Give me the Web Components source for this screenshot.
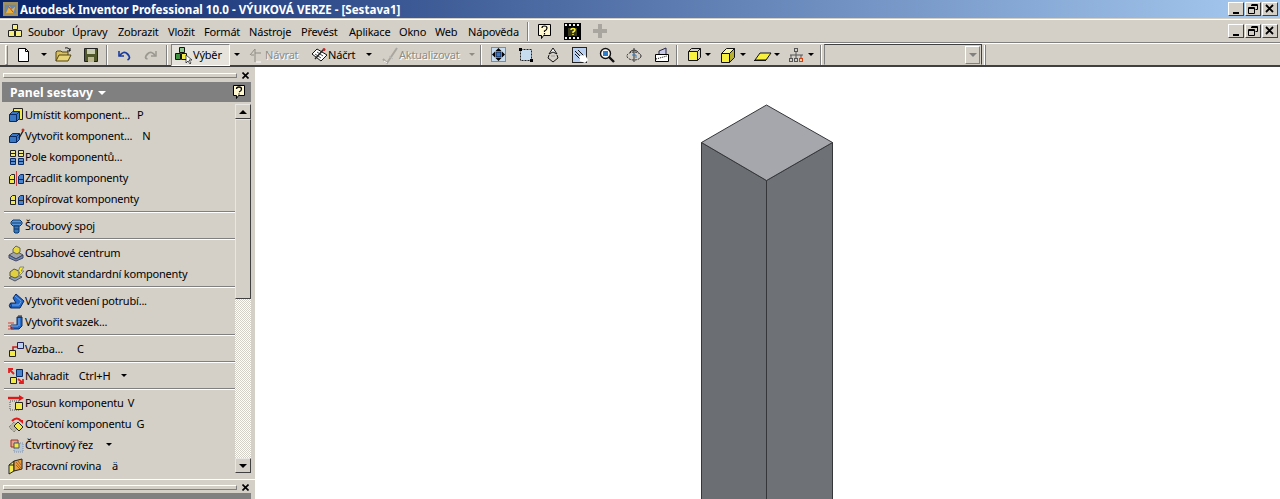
<!DOCTYPE html>
<html>
<head>
<meta charset="utf-8">
<style>
  html, body { margin: 0; padding: 0; height: 100%; overflow: hidden; background: #d4d0c8; }
  body { font: 11px "Noto Sans", sans-serif; color: #000; }
  inv-app { height: 499px; }
</style>
</head>
<body>
<inv-app>
  <inv-titlebar>Autodesk Inventor Professional 10.0 - VÝUKOVÁ VERZE - [Sestava1]</inv-titlebar>
  <inv-menubar></inv-menubar>
  <inv-toolbar></inv-toolbar>
  <inv-workspace>
    <inv-panel>
      <inv-panel-item icon="place" key="P" style="--key:7px">Umístit komponent...</inv-panel-item>
      <inv-panel-item icon="create" key="N" style="--key:10px">Vytvořit komponent...</inv-panel-item>
      <inv-panel-item icon="pattern">Pole komponentů...</inv-panel-item>
      <inv-panel-item icon="mirror">Zrcadlit komponenty</inv-panel-item>
      <inv-panel-item icon="copy">Kopírovat komponenty</inv-panel-item>
      <inv-panel-sep></inv-panel-sep>
      <inv-panel-item icon="bolt">Šroubový spoj</inv-panel-item>
      <inv-panel-sep></inv-panel-sep>
      <inv-panel-item icon="content">Obsahové centrum</inv-panel-item>
      <inv-panel-item icon="refresh">Obnovit standardní komponenty</inv-panel-item>
      <inv-panel-sep></inv-panel-sep>
      <inv-panel-item icon="pipe">Vytvořit vedení potrubí...</inv-panel-item>
      <inv-panel-item icon="harness">Vytvořit svazek...</inv-panel-item>
      <inv-panel-sep></inv-panel-sep>
      <inv-panel-item icon="constraint" key="C" style="--key:14px">Vazba...</inv-panel-item>
      <inv-panel-sep></inv-panel-sep>
      <inv-panel-item icon="replace" key="Ctrl+H" arrow style="--key:10px;--am:11px">Nahradit</inv-panel-item>
      <inv-panel-sep></inv-panel-sep>
      <inv-panel-item icon="move" key="V" style="--key:4px">Posun komponentu</inv-panel-item>
      <inv-panel-item icon="rotate" key="G" style="--key:5px">Otočení komponentu</inv-panel-item>
      <inv-panel-item icon="section" arrow style="--am:13px">Čtvrtinový řez</inv-panel-item>
      <inv-panel-item icon="plane" key="ä" style="--key:11px">Pracovní rovina</inv-panel-item>
    </inv-panel>
    <inv-viewport></inv-viewport>
  </inv-workspace>
</inv-app>

<script>
const ICONS = {
  place: '<path d="M5.500 1.500h9v11h-3v-8h-6z" fill="#f4e94a" stroke="#222"/><path d="M1.500 7.500l3-3h7v7l-3 3h-7z" fill="#3b78c4" stroke="#0a2a66"/><path d="M1.500 7.500h7v7M8.500 7.500l3-3" fill="none" stroke="#0a2a66"/>',
  create: '<path d="M1.500 8.500l3-3h7v6l-3 3h-7z" fill="#3b78c4" stroke="#0a2a66"/><path d="M1.500 8.500h7v6M8.500 8.500l3-3" fill="none" stroke="#0a2a66"/><path d="M11 10l4-7" stroke="#222" stroke-width="1.500"/><circle cx="15" cy="2" r="1.500" fill="#c03020"/>',
  pattern: '<path d="M2.500 1.500h5v6h-5zM10.500 1.500h5v6h-5z" fill="#f2ea7a" stroke="#222"/><path d="M2.500 9.500h5v6h-5zM10.500 9.500h5v6h-5z" fill="#5a90d0" stroke="#0a2a66"/><path d="M2.500 4.500h5M10.500 4.500h5M2.500 12.500h5M10.500 12.500h5" stroke="#222"/>',
  mirror: '<path d="M1.500 6.500l2-2h3v9h-5z" fill="#f0e850" stroke="#222"/><path d="M10.500 6.500l2-2h3v9h-5z" fill="#4a84cc" stroke="#0a2a66"/><path d="M8.500 1v15" stroke="#d04040"/><path d="M2 9.500h4M11 9.500h4" stroke="#222"/>',
  copy: '<path d="M2.500 6.500l2-2h3v9h-5z" fill="#f0e850" stroke="#222"/><path d="M10.500 6.500l2-2h3v9h-5z" fill="#4a84cc" stroke="#0a2a66"/><path d="M3 9.500h4M11 9.500h4" stroke="#222"/>',
  bolt: '<path d="M5 2h7l2 2v2l-2 2H5L3 6V4z" fill="#5a96d8" stroke="#0a3a70"/><path d="M6 8h5v6l-1 1H7l-1-1z" fill="#3a78b8" stroke="#0a3a70"/><path d="M6 11h5M4 5h9" stroke="#0a3a70"/>',
  content: '<path d="M1 10l7-4 7 4-7 4z" fill="#a0a4a8" stroke="#555"/><path d="M1 10v3l7 3 7-3v-3l-7 4z" fill="#6a8fb5" stroke="#446"/><path d="M5 4l3-3 4 2v4l-3 2-4-2z" fill="#e8d840" stroke="#665"/>',
  refresh: '<path d="M1 12l7-4 6 3-7 4z" fill="#8fa4c0" stroke="#555"/><path d="M2 6l4-3 5 2v5l-4 2-5-2z" fill="#e0d040" stroke="#554"/><path d="M12 1l4 0-3 4h3l-6 6 2-5H10z" fill="#ffee20" stroke="#887"/>',
  pipe: '<path d="M8 1l8 7-4 7H2.500Q0 13 2.500 10H8L5 5z" fill="#2468c8" stroke="#0a2a66"/><path d="M3 12h8l2-3.500M7 3l6 5" fill="none" stroke="#6aa4ec"/><path d="M2.500 10q2 2.500 0 5" fill="none" stroke="#0a2a66"/>',
  harness: '<path d="M9 3h5v9l-3 3H3v-4h6z" fill="#2468c8" stroke="#0a2a66"/><path d="M11 1v3M13 1v3" stroke="#222"/><path d="M0 9h6M0 12h5M0 15h6" stroke="#d04030"/><path d="M3 12h7M11 4v8" stroke="#7ab0f0"/>',
  constraint: '<path d="M9.500 1.500h6v6h-6z" fill="#b9d0f0" stroke="#225"/><path d="M1.500 9.500h6v6h-6z" fill="#f2e94a" stroke="#222"/><path d="M5 9V6h4" fill="none" stroke="#c02020" stroke-width="1.600"/>',
  replace: '<path d="M8.500 1.500h6v7h-6z" fill="#4a84cc" stroke="#0a2a66"/><path d="M2.500 9.500h6v6h-6z" fill="#f2e94a" stroke="#222"/><path d="M1 1l5 5M1 5V1h4" fill="none" stroke="#e02020" stroke-width="1.800"/><path d="M15 15l-5-4M15 11v4h-4" fill="none" stroke="#e02020" stroke-width="1.800"/>',
  move: '<path d="M2 6h9v9H2z" fill="#d8d4c8" stroke="#555" stroke-dasharray="1 1"/><path d="M7.500 7.500h7v7h-7z" fill="#f2e94a" stroke="#222"/><path d="M0 3h12" stroke="#e01818" stroke-width="2.400"/><path d="M11 0l5 3-5 3z" fill="#e01818"/>',
  rotate: '<path d="M1 11l5-5 5 5-5 5z" fill="#bcb8a8" stroke="#666" stroke-dasharray="1 1"/><path d="M6 10l4-4 5 5-4 4z" fill="#f2e94a" stroke="#222"/><path d="M4 5q5-5 9 0" fill="none" stroke="#e01818" stroke-width="2.200"/><path d="M11 4h4v4z" fill="#e01818"/>',
  section: '<path d="M3 3h7v7H3z" fill="#e8a090" stroke="#a03020"/><path d="M6 6h9v9H6z" fill="#b8c8dc" stroke="#8090a8" stroke-dasharray="1 1"/><path d="M6 6h5v5H6z" fill="#f2e94a" stroke="#555"/>',
  plane: '<path d="M1 7l5-4v10l-5 3z" fill="#f2e94a" stroke="#222"/><path d="M6 3l8-2v10l-8 2z" fill="#e8a040" stroke="#222"/><path d="M8 4l5 6M8 7l4 4M10 3l3 4" stroke="#b06020"/><path d="M1 7h5" stroke="#222"/>',
  assembly: '<path d="M5.500 1.500h5v5h-5z" fill="#f8f080" stroke="#222"/><path d="M1.500 7.500h6v6h-6zM8.500 7.500h6v6h-6z" fill="#f8f080" stroke="#222"/>',
  selectA: '<path d="M4.500 .5h5v5h-5z" fill="#8fc88f" stroke="#111"/><path d="M.5 6.500h5v6h-5z" fill="#3f903f" stroke="#111"/><path d="M6.500 6.500h5v6h-5z" fill="#f2e94a" stroke="#111"/><path d="M11 8l0 8 2-2 2 3 1-1-2-3h3z" fill="#fff" stroke="#111" stroke-width=".7"/>',
  doc: '<path d="M2.500 1.500h7l3 3v10h-10z" fill="#fff" stroke="#000"/><path d="M9.500 1.500v3h3" fill="none" stroke="#000"/>',
  open: '<path d="M1 14V5l1-1h4l1 1h6v3" fill="#d8c060" stroke="#554410"/><path d="M1 14l3-6h12l-3 6z" fill="#e8d478" stroke="#554410"/><path d="M10 1q4-1 5 3M15 1v3h-3" fill="none" stroke="#111"/>',
  save: '<path d="M1.500 1.500h13v13h-13z" fill="#50582c" stroke="#222"/><path d="M4 2h8v5H4z" fill="#c8ccb0"/><path d="M5 10h6v5H5z" fill="#bcb890"/>',
  undo: '<path d="M3 4v5h5" fill="none" stroke="#1c3c9c" stroke-width="1.600"/><path d="M3.500 9q4-6 8-2t0 6" fill="none" stroke="#1c3c9c" stroke-width="1.800"/>',
  redo: '<path d="M13 4v5H8" fill="none" stroke="#9a9890" stroke-width="1.500"/><path d="M12.500 9q-4-6-8-2t0 5" fill="none" stroke="#9a9890" stroke-width="1.800"/>',
  back: '<path d="M2 8l5-6 0 4h6M7 6v9M3 8h3" fill="none" stroke="#8e8c84"/><path d="M8 15h5" stroke="#fff"/>',
  sketch: '<path d="M2 7l5-5 10 6-6 6z" fill="#fff" stroke="#111"/><path d="M5 7l6 4M7 5l6 4" stroke="#444"/><path d="M13 3l-8 9" stroke="#222" stroke-width="1.400"/><circle cx="14" cy="2.500" r="1.500" fill="#c02020"/>',
  update: '<path d="M2 12l4 4 10-15" fill="none" stroke="#a8a69e" stroke-width="2"/><path d="M3 14l3 2" stroke="#fff"/><path d="M8 9l4 3" stroke="#bbb"/>',
  fit: '<rect x=".5" y=".5" width="14" height="14" fill="#c8dcf0" stroke="#888"/><path d="M7.500 1l3 3h-6zM7.500 14l3-3h-6zM1 7.500l3-3v6zM14 7.500l-3-3v6z" fill="#000"/><rect x="5" y="5" width="5" height="5" fill="#3a78c4" stroke="#124"/>',
  zoomwin: '<rect x="2.500" y="2.500" width="11" height="11" fill="#c8dcf0" stroke="#222" stroke-dasharray="2 1"/><rect x="1" y="1" width="3" height="3"/><rect x="12" y="12" width="3" height="3"/>',
  rotview: '<path d="M8 1l4 6-4-2-4 2z" fill="#fff" stroke="#111"/><path d="M8 15l5-4-1-3M8 15l-5-4 1-3" fill="none" stroke="#111"/><path d="M6 9h4" stroke="#999"/>',
  pan: '<rect x=".5" y=".5" width="14" height="15" fill="#b9d0f0" stroke="#222"/><path d="M3 4l9 9M6 3l8 8M3 7l7 7" stroke="#111"/><path d="M7 9l6-1 3 5-3 3-5-2z" fill="#fff"/>',
  mag: '<circle cx="6.500" cy="6.500" r="5" fill="#fff" stroke="#111" stroke-width="1.400"/><rect x="4" y="4" width="5" height="5" fill="#2c7cc8"/><path d="M10 10l5 5" stroke="#111" stroke-width="2.400"/>',
  orbit: '<ellipse cx="8" cy="9" rx="7" ry="4" fill="none" stroke="#222" stroke-dasharray="2 1"/><path d="M8 1v14M4 5q4-4 8 0" fill="none" stroke="#333"/><path d="M6 8h4v3" fill="none" stroke="#2c7cc8"/>',
  sectionview: '<path d="M1.500 7.500h13v7h-13z" fill="#fff" stroke="#000"/><path d="M5 7V4l7-3v6" fill="#c8c8e8" stroke="#224"/><path d="M2 12l11-3" stroke="#000" stroke-dasharray="1 1"/>',
  boxa: '<path d="M1.500 4.500h9v9h-9z" fill="#f8f040" stroke="#111"/><path d="M1.500 4.500l3-3h9v9l-3 3M10.500 4.500l3-3" fill="none" stroke="#111"/>',
  boxb: '<path d="M1.500 6.500h8v9h-8z" fill="#f8f040" stroke="#111"/><path d="M1.500 6.500l5-5h8l-5 5z" fill="#f8f8a0" stroke="#111"/><path d="M9.500 6.500l5-5v9l-5 5z" fill="#b8b030" stroke="#111"/>',
  plan: '<path d="M1 13l5-7h11l-5 7z" fill="#f8f040" stroke="#111"/><path d="M0 13.500h12" stroke="#111"/>',
  tree: '<g fill="none" stroke="#555"><rect x="6.500" y="1.500" width="3" height="3"/><path d="M8 5v3M2 8h13M3 8v3M8 8v3M13 8v3"/><rect x="1.500" y="11.500" width="3" height="3"/><rect x="6.500" y="11.500" width="3" height="3"/><rect x="11.500" y="11.500" width="3" height="3" stroke="#d04010" fill="#f8d0b0"/></g>'
};
const svgIcon = (name, s = 16) => `<svg width="${s}" height="${s}" viewBox="0 0 16 16" style="display:block;overflow:visible">${ICONS[name]}</svg>`;

const CAPS = {
  min: '<path d="M3 9h6v2H3z"/>',
  restore: '<path d="M4.500 1.500h6v5h-2M4 2.500h6" fill="none" stroke="#000"/><path d="M1.500 4.500h6v6h-6zM1 5.500h7" fill="none" stroke="#000"/>',
  close: '<path d="M2 2l7 7M9 2l-7 7" stroke="#000" stroke-width="1.800"/>'
};

class InvApp extends HTMLElement {
  constructor() {
    super();
    this.attachShadow({mode: "open"}).innerHTML = `
      <style>:host { display: flex; flex-direction: column; }</style>
      <slot></slot>`;
  }
}

class InvCaption extends HTMLElement {
  constructor() {
    super();
    const kind = this.getAttribute("kind");
    this.attachShadow({mode: "open"}).innerHTML = `
      <style>
        :host { display: block; width: 16px; height: 14px; margin-left: 1px; background: #d4d0c8; box-sizing: border-box;
          border: 1px solid; border-color: #fff #404040 #404040 #fff; }
        svg { display: block; margin: 0 1px; }
      </style>
      <svg width="12" height="12" viewBox="0 0 12 12">${CAPS[kind]}</svg>`;
  }
}

class InvTitlebar extends HTMLElement {
  constructor() {
    super();
    this.attachShadow({mode: "open"}).innerHTML = `
      <style>
        :host { display: flex; align-items: center; height: 18px; flex: none; box-sizing: border-box; padding: 0 2px 0 3px;
          background: linear-gradient(90deg, #0a246a, #a6caf0); color: #fff; font: bold 11.6px "Noto Sans", sans-serif; }
        svg { margin-right: 2px; flex: none; }
        .t { flex: 1; white-space: nowrap; }
        .b { display: flex; }
      </style>
      <svg width="15" height="15" viewBox="0 0 16 16"><rect width="16" height="15" fill="#a09060"/><path d="M2 3h12v9H2z" fill="#6a88a8"/><path d="M3 12l4-8 2 4 4-3-2 7z" fill="#e8b040"/><path d="M6 5l5 6" stroke="#c04020"/></svg>
      <div class="t"><slot></slot></div>
      <div class="b"><inv-caption kind="min"></inv-caption><inv-caption kind="restore"></inv-caption><inv-caption kind="close"></inv-caption></div>`;
  }
}

const MENU = [["Soubor",44],["Úpravy",46],["Zobrazit",50],["Vložit",36],["Formát",45],["Nástroje",52],["Převést",48],["Aplikace",50],["Okno",36],["Web",33],["Nápověda",52]];

class InvMenubar extends HTMLElement {
  constructor() {
    super();
    const items = MENU.map(([t, w]) => `<span style="width:${w}px">${t}</span>`).join("");
    this.attachShadow({mode: "open"}).innerHTML = `
      <style>
        :host { display: flex; align-items: center; height: 24px; flex: none; box-sizing: border-box; padding: 0 2px 0 7px;
          background: #d4d0c8; border-top: 1px solid #fff; border-bottom: 1px solid #808080; margin-top: 1px; }
        span { display: block; white-space: nowrap; font-size: 11px; letter-spacing: -.2px; }
        .logo { margin-right: 5px; }
        .sep { width: 2px; height: 19px; margin: 0 8px 0 7px; border-left: 1px solid #808080; border-right: 1px solid #fff; box-sizing: border-box; }
        .ex { margin-right: 11px; }
        .sp { flex: 1; }
        .b { display: flex; }
      </style>
      <div class="logo">${svgIcon("assembly")}</div>
      ${items}
      <div class="sep"></div>
      <svg class="ex" width="16" height="16" viewBox="0 0 16 16"><path d="M1.500 1.500h12v11h-7l-2 3v-3h-3z" fill="#fff8d0" stroke="#000"/><path d="M5 5q0-2 2.500-2t2.500 2q0 2-2.500 3v1M7.500 10v1.500" fill="none" stroke="#000" stroke-width="1.200"/></svg>
      <svg class="ex" width="17" height="17" viewBox="0 0 17 17"><rect width="17" height="17"/><path d="M1 1h2v2H1zM5 1h2v2H5zM9 1h2v2H9zM13 1h2v2h-2zM1 14h2v2H1zM5 14h2v2H5zM9 14h2v2H9zM13 14h2v2h-2z" fill="#eee"/><path d="M4 5h9v8H4z" fill="#383818"/><path d="M7 7q0-1.500 2-1.500t2 1.500q0 1-2 2v1M9 11v1" fill="none" stroke="#f8f040" stroke-width="1.500"/></svg>
      <svg width="16" height="16" viewBox="0 0 16 16"><path d="M6 1h4v5h5v4h-5v5H6v-5H1V6h5z" fill="#a8a69e"/></svg>
      <div class="sp"></div>
      <div class="b"><inv-caption kind="min"></inv-caption><inv-caption kind="restore"></inv-caption><inv-caption kind="close"></inv-caption></div>`;
  }
}

class InvTool extends HTMLElement {
  constructor() {
    super();
    const icon = this.getAttribute("icon");
    const w = this.getAttribute("w");
    const drop = this.getAttribute("drop");
    const label = this.getAttribute("label");
    this.attachShadow({mode: "open"}).innerHTML = `
      <style>
        :host { display: flex; align-items: center; flex: none; height: 22px; box-sizing: border-box; width: ${w}px; }
        :host([off]) { color: #8e8c84; text-shadow: 1px 1px 0 #fff; }
        :host([on]) { background: #e6e3dc; border: 1px solid; border-color: #808080 #fff #fff #808080; padding-left: 3px; }
        .l { white-space: nowrap; font-size: 11px; letter-spacing: -.2px; margin-left: var(--lg, 1px); }
        .d { width: 0; height: 0; border: 3px solid transparent; border-top: 3px solid #000; border-bottom: 0; margin-left: var(--dg, 10px); }
        :host([off]) .d { border-top-color: #8e8c84; }
      </style>
      ${icon ? svgIcon(icon) : ""}
      ${label ? `<span class="l">${label}</span>` : ""}
      ${drop != null ? `<span class="d"></span>` : ""}`;
  }
}

class InvToolbar extends HTMLElement {
  constructor() {
    super();
    this.attachShadow({mode: "open"}).innerHTML = `
      <style>
        :host { display: flex; align-items: center; flex: none; height: 24px; box-sizing: border-box; padding-left: 5px;
          background: #d4d0c8; border-top: 1px solid #fff; border-bottom: 2px solid #404040; }
        .grip { width: 3px; height: 20px; border: 1px solid; border-color: #fff #808080 #808080 #fff; box-sizing: border-box; margin-right: 8px; flex: none; }
        .sep { width: 2px; height: 20px; border-left: 1px solid #808080; border-right: 1px solid #fff; box-sizing: border-box; flex: none; }
        .combo { width: 158px; height: 21px; margin-left: 2px; box-sizing: border-box; background: #d4d0c8; display: flex; justify-content: flex-end; align-items: center;
          border: 1px solid; border-color: #404040 #404040 #d4d0c8 #808080; padding-right: 1px; flex: none; }
        .arr { width: 15px; height: 18px; border: 1px solid; border-color: #fff #808080 #808080 #fff; box-sizing: border-box; display: flex; align-items: center; justify-content: center; }
        .arr i { width: 0; height: 0; border: 4px solid transparent; border-top: 4px solid #808080; border-bottom: 0; }
        .end { width: 2px; height: 20px; margin-left: 2px; border-left: 1px solid #fff; border-right: 1px solid #808080; box-sizing: border-box; }
      </style>
      <div class="grip"></div>
      <inv-tool icon="doc" w="24" style="margin-right:1px" ></inv-tool>
      <inv-tool drop w="14" style="--dg:0px;"></inv-tool>
      <inv-tool icon="open" w="28" ></inv-tool>
      <inv-tool icon="save" w="23"></inv-tool>
      <div class="sep" style="margin-right:8px"></div>
      <inv-tool icon="undo" w="27"></inv-tool>
      <inv-tool icon="redo" w="23"></inv-tool>
      <div class="sep" style="margin-right:3px"></div>
      <inv-tool on icon="selectA" label="Výběr" w="59" style="--lg:2px"></inv-tool>
      <inv-tool drop w="17" style="--dg:3px;margin-left:1px"></inv-tool>
      <inv-tool off icon="back" label="Návrat" w="62"></inv-tool>
      <inv-tool icon="sketch" label="Náčrt" drop w="71" style="--dg:11px;--lg:2px"></inv-tool>
      <inv-tool off icon="update" label="Aktualizovat" drop w="99" style="--dg:10px;--lg:2px"></inv-tool>
      <div class="sep" style="margin-right:9px"></div>
      <inv-tool icon="fit" w="27"></inv-tool>
      <inv-tool icon="zoomwin" w="27"></inv-tool>
      <inv-tool icon="rotview" w="27"></inv-tool>
      <inv-tool icon="pan" w="27"></inv-tool>
      <inv-tool icon="mag" w="27"></inv-tool>
      <inv-tool icon="orbit" w="28"></inv-tool>
      <inv-tool icon="sectionview" w="22"></inv-tool>
      <div class="sep" style="margin-right:9px"></div>
      <inv-tool icon="boxa" drop w="33" style="--dg:2px"></inv-tool>
      <inv-tool icon="boxb" drop w="34" style="--dg:4px"></inv-tool>
      <inv-tool icon="plan" drop w="34" style="--dg:4px"></inv-tool>
      <inv-tool icon="tree" drop w="32" style="--dg:4px"></inv-tool>
      <div class="sep"></div>
      <div class="combo"><div class="arr"><i></i></div></div>
      <div class="end"></div>`;
  }
}

class InvWorkspace extends HTMLElement {
  constructor() {
    super();
    this.attachShadow({mode: "open"}).innerHTML = `
      <style>:host { display: flex; flex: 1; min-height: 0; }</style>
      <slot></slot>`;
  }
}

class InvPanelItem extends HTMLElement {
  constructor() {
    super();
    const key = this.getAttribute("key");
    const arrow = this.hasAttribute("arrow");
    this.attachShadow({mode: "open"}).innerHTML = `
      <style>
        :host { display: flex; align-items: center; height: 21px; flex: none; padding-left: 8px; white-space: nowrap; font-size: 11px; letter-spacing: -.2px; }
        svg { margin-right: 1px; flex: none; }
        .k { margin-left: var(--key, 12px); }
        .a { width: 0; height: 0; border: 3px solid transparent; border-top: 3px solid #000; border-bottom: 0; margin-left: var(--am, 10px); }
      </style>
      ${svgIcon(this.getAttribute("icon"))}
      <span><slot></slot></span>
      ${key ? `<span class="k">${key}</span>` : ""}
      ${arrow ? `<span class="a"></span>` : ""}`;
  }
}

class InvPanelSep extends HTMLElement {
  constructor() {
    super();
    this.attachShadow({mode: "open"}).innerHTML = `
      <style>
        :host { display: block; height: 2px; margin: 2px 0 2px 4px; background: #808080; border-bottom: 1px solid #fff; box-sizing: border-box; }
      </style>`;
  }
}

class InvPanelGrip extends HTMLElement {
  constructor() {
    super();
    this.attachShadow({mode: "open"}).innerHTML = `
      <style>
        :host { display: flex; align-items: center; height: 10px; padding: 0 6px 0 3px; flex: none; }
        .g { flex: 1; height: 5px; box-sizing: border-box; border-top: 1px solid #fff; border-bottom: 1px solid #808080; border-left: 1px solid #fff; border-right: 1px solid #808080; background: #d4d0c8; margin-right: 5px; }
        svg { display: block; }
      </style>
      <div class="g"></div>
      <svg width="7" height="7" viewBox="0 0 7 7"><path d="M.5 .5l6 6M6.500 .5l-6 6" stroke="#000" stroke-width="1.600"/></svg>`;
  }
}

class InvScrollbar extends HTMLElement {
  constructor() {
    super();
    this.attachShadow({mode: "open"}).innerHTML = `
      <style>
        :host { display: flex; flex-direction: column; width: 16px; flex: none;
          background: repeating-conic-gradient(#d4d0c8 0 25%, #fff 0 50%) 0 0 / 2px 2px; }
        .b { height: 15px; flex: none; background: #d4d0c8; box-sizing: border-box; border: 1px solid; border-color: #e8e6e0 #404040 #404040 #e8e6e0;
          display: flex; align-items: center; justify-content: center; }
        .thumb { height: 180px; flex: none; background: #d4d0c8; box-sizing: border-box; border: 1px solid; border-color: #e8e6e0 #404040 #404040 #e8e6e0; }
        .sp { flex: 1; }
        i { width: 0; height: 0; border: 4px solid transparent; }
        .up { border-top: 0; border-bottom: 4px solid #000; }
        .dn { border-bottom: 0; border-top: 4px solid #000; }
      </style>
      <div class="b"><i class="up"></i></div>
      <div class="thumb"></div>
      <div class="sp"></div>
      <div class="b"><i class="dn"></i></div>`;
  }
}

class InvPanel extends HTMLElement {
  constructor() {
    super();
    this.attachShadow({mode: "open"}).innerHTML = `
      <style>
        :host { display: flex; flex-direction: column; width: 255px; flex: none; box-sizing: border-box; padding-top: 3px; overflow: hidden; background: #d4d0c8; }
        .head { display: flex; align-items: center; justify-content: space-between; height: 20px; margin: 2px 4px 0 2px; padding: 0 5px 0 8px; flex: none;
          background: #808080; color: #fff; font: bold 12.2px "Noto Sans", sans-serif; }
        .head i { display: inline-block; width: 0; height: 0; border: 4px solid transparent; border-top: 4px solid #fff; border-bottom: 0; margin-left: 5px; vertical-align: 2px; }
        .body { display: flex; height: 372px; margin-top: 2px; padding-right: 4px; flex: none; }
        .list { flex: 1; min-width: 0; }
        inv-scrollbar { margin-bottom: 3px; }
        .foot { margin-top: 3px; border-top: 1px solid #fff; padding-top: 2px; }
        .head2 { height: 10px; background: #808080; margin: 1px 4px 0 2px; flex: none; }
      </style>
      <inv-panel-grip></inv-panel-grip>
      <div class="head"><span>Panel sestavy<i></i></span>
        <svg width="14" height="16" viewBox="0 0 14 16"><path d="M1.500 1.500h11v10h-6l-2 3v-3h-3z" fill="#fff8d0" stroke="#000"/><path d="M4.500 5q0-2 2.500-2t2.500 2q0 2-2.500 3M7 9.500v1" fill="none" stroke="#000" stroke-width="1.300"/></svg>
      </div>
      <div class="body">
        <div class="list"><slot></slot></div>
        <inv-scrollbar></inv-scrollbar>
      </div>
      <div class="foot"><inv-panel-grip></inv-panel-grip></div>
      <div class="head2"></div>`;
  }
}

class InvViewport extends HTMLElement {
  constructor() {
    super();
    this.attachShadow({mode: "open"}).innerHTML = `
      <style>
        :host { display: block; flex: 1; background: #fff; overflow: hidden; }
        svg { display: block; }
      </style>
      <svg width="1025" height="433" viewBox="0 1 1025 433">
        <g stroke="#34363a" stroke-width="1" stroke-linejoin="round">
          <path d="M446.500 76.500L511.500 114.500V434H446.500z" fill="#6b6e72"/>
          <path d="M511.500 114.500L577.500 76.500V434H511.500z" fill="#6e7176"/>
          <path d="M511.500 39L577.500 76.500L511.500 114.500L446.500 76.500z" fill="#a5a7ac"/>
        </g>
      </svg>`;
  }
}

customElements.define("inv-app", InvApp);
customElements.define("inv-caption", InvCaption);
customElements.define("inv-titlebar", InvTitlebar);
customElements.define("inv-menubar", InvMenubar);
customElements.define("inv-tool", InvTool);
customElements.define("inv-toolbar", InvToolbar);
customElements.define("inv-workspace", InvWorkspace);
customElements.define("inv-panel-item", InvPanelItem);
customElements.define("inv-panel-sep", InvPanelSep);
customElements.define("inv-panel-grip", InvPanelGrip);
customElements.define("inv-scrollbar", InvScrollbar);
customElements.define("inv-panel", InvPanel);
customElements.define("inv-viewport", InvViewport);
</script>
</body>
</html>
